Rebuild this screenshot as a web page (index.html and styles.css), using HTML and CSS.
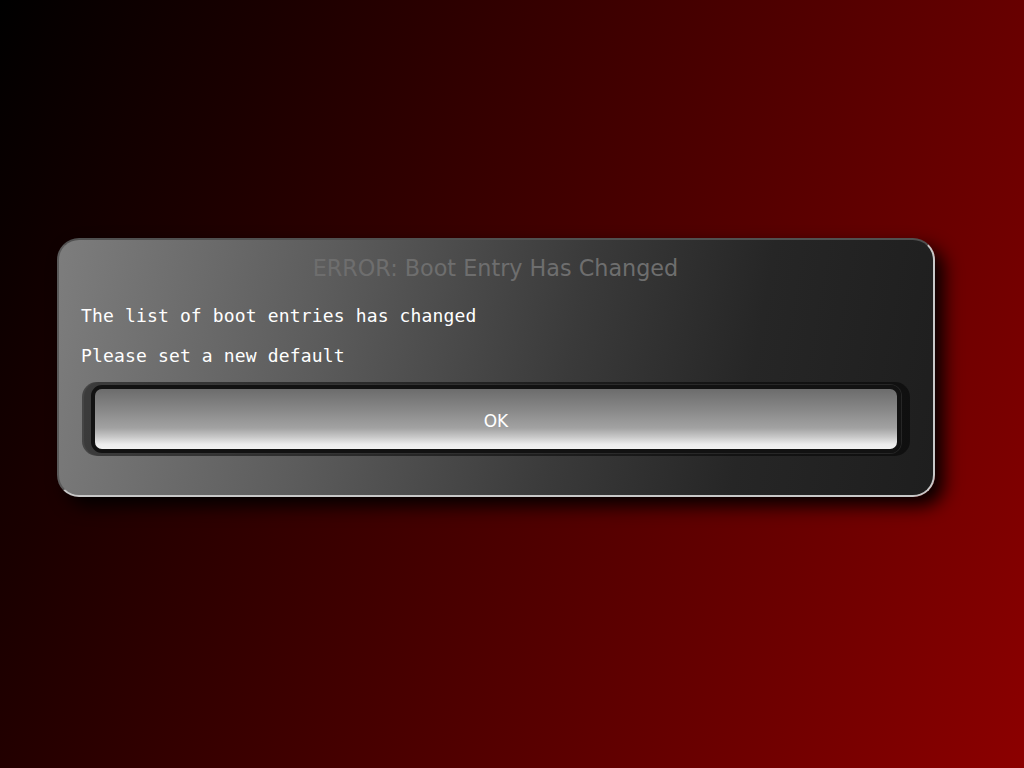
FILE: index.html
```html
<!DOCTYPE html>
<html>
<head>
<meta charset="utf-8">
<title>Boot Entry Has Changed</title>
<link rel="stylesheet" href="styles.css">
</head>
<body>
<div class="screen">
  <div class="dialog">
    <div class="title">ERROR: Boot Entry Has Changed</div>
    <div class="message">
      <div class="line">The list of boot entries has changed</div>
      <div class="line">Please set a new default</div>
    </div>
    <div class="btn-frame">
      <div class="btn-ring">
        <div class="btn-face">OK</div>
      </div>
    </div>
  </div>
</div>
</body>
</html>
```

FILE: styles.css
```css
html, body {
  margin: 0;
  padding: 0;
}
body {
  width: 1024px;
  height: 768px;
  overflow: hidden;
  background: linear-gradient(115deg, #000 0%, #1a0000 20%, #8c0000 100%);
}
.screen {
  padding: 238px 0 0 57px;
}
.dialog {
  box-sizing: border-box;
  width: 878px;
  height: 259px;
  border-radius: 22px;
  border: 2px solid;
  border-color: #505050 #c8c8c8 #c8c8c8 #5a5a5a;
  background: linear-gradient(100deg, #7d7d7d 0%, #5c5c5c 30%, #3a3a3a 58%, #262626 78%, #1e1e1e 100%);
  box-shadow: 9px 9px 18px rgba(0,0,0,0.95);
  padding: 15px 23px 0 22px;
  display: flex;
  flex-direction: column;
}
.title {
  font-family: "DejaVu Sans", sans-serif;
  font-size: 22.3px;
  line-height: 26px;
  color: #6e6e6e;
  text-align: center;
}
.message {
  margin-top: 24px;
  display: flex;
  flex-direction: column;
  gap: 18px;
  font-family: "DejaVu Sans Mono", monospace;
  font-size: 18px;
  letter-spacing: 0.15px;
  line-height: 22px;
  color: #fff;
}
.btn-frame {
  margin: 15px 0 0 1px;
  height: 74px;
  box-sizing: border-box;
  border-radius: 15px;
  background: rgba(0,0,0,0.5);
  box-shadow: inset 2px 0 1px rgba(255,255,255,0.06);
  padding: 3px 9px;
}
.btn-ring {
  height: 100%;
  box-sizing: border-box;
  border: 4px solid #121212;
  border-radius: 11px;
  box-shadow: 0 0 0 1px rgba(60,60,60,0.5);
}
.btn-face {
  box-sizing: border-box;
  height: 100%;
  padding-top: 4px;
  border-radius: 7px;
  background: linear-gradient(180deg, #6c6c6c 0%, #888 35%, #a2a2a2 65%, #c8c8c8 80%, #ececec 92%, #f2f2f2 100%);
  display: flex;
  align-items: center;
  justify-content: center;
  font-family: "DejaVu Sans", sans-serif;
  font-size: 17px;
  color: #fff;
}
```
